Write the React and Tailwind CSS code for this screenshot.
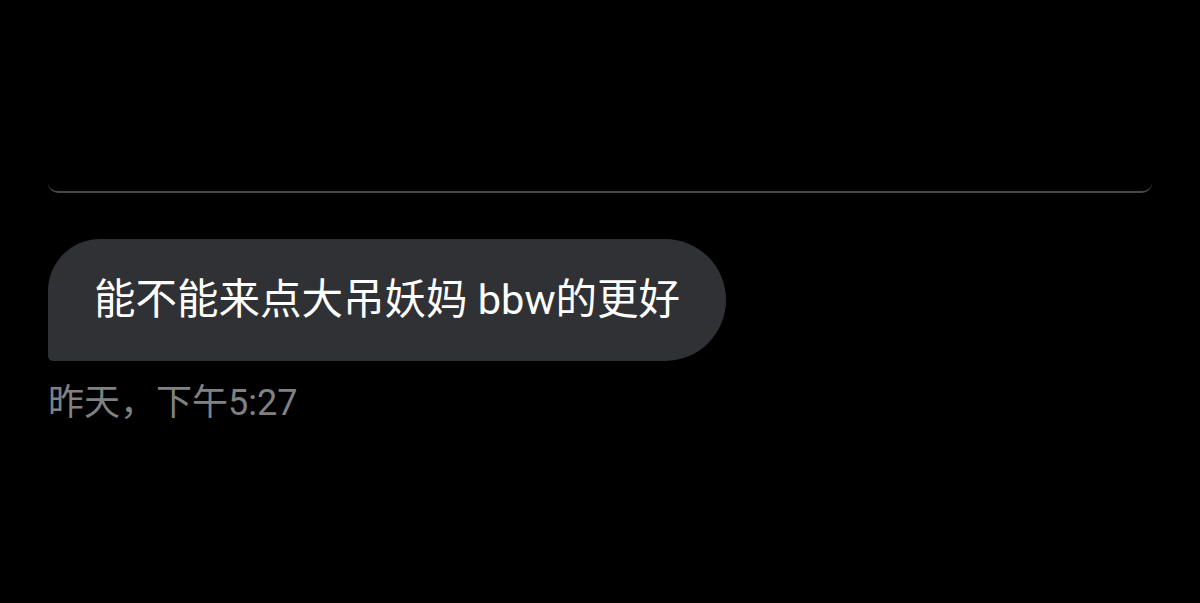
export default function App() {
  const font = { fontFamily: 'Roboto, "Noto Sans CJK SC", "Noto Sans", sans-serif' };
  return (
    <div className="w-[1200px] h-[603px] bg-black overflow-hidden px-[48px]" style={font}>
      {/* bottom edge of the previous card */}
      <div className="h-[193px] border-b-2 border-[#47484b] rounded-b-[10px]" />
      <div className="mt-[46px] flex">
        <div className="h-[122px] pl-[46px] pr-[46px] flex items-center bg-[#2f3134] rounded-tl-[52px] rounded-tr-[61px] rounded-br-[61px] rounded-bl-[5px]">
          <span className="text-white text-[41.5px] leading-none">能不能来点大吊妖妈 bbw的更好</span>
        </div>
      </div>
      <div className="mt-[24px] text-[#808183] text-[36px] leading-none">昨天，下午5:27</div>
    </div>
  );
}
